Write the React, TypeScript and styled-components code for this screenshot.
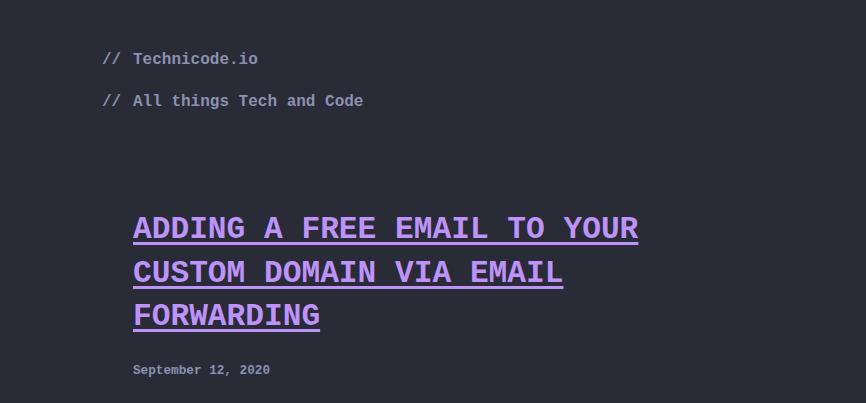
import React from 'react'
import styled, { createGlobalStyle } from 'styled-components'

const GlobalStyle = createGlobalStyle`
  html, body {
    margin: 0;
    padding: 0;
    background: #292b37;
  }
  body {
    font-family: "Liberation Mono", "Courier New", monospace;
  }
`

const Page = styled.div`
  min-height: 403px;
  background: #292b37;
  padding: 46px 0 0 102px;
  box-sizing: border-box;
`

const Header = styled.header`
  display: flex;
  flex-direction: column;
  gap: 14px;
`

const HeaderLine = styled.div`
  display: flex;
  font-size: 16px;
  line-height: 28px;
  font-weight: bold;
  color: #8a92b0;
`

const Slashes = styled.span`
  width: 31px;
  flex-shrink: 0;
`

const Post = styled.article`
  padding: 92px 0 0 31px;
  max-width: 520px;
`

const Title = styled.h1`
  margin: 0;
  font-size: 31.2px;
  line-height: 43.6px;
  font-weight: bold;
  text-transform: uppercase;
  a {
    color: #bd93f9;
    text-decoration: underline;
    text-decoration-thickness: 3px;
    text-underline-offset: 4px;
  }
`

const PostDate = styled.div`
  margin-top: 24px;
  font-size: 12.7px;
  font-weight: bold;
  color: #8a92b0;
`

function App() {
  return (
    <>
      <GlobalStyle />
      <Page>
        <Header>
          <HeaderLine>
            <Slashes>//</Slashes>
            <span>Technicode.io</span>
          </HeaderLine>
          <HeaderLine>
            <Slashes>//</Slashes>
            <span>All things Tech and Code</span>
          </HeaderLine>
        </Header>
        <Post>
          <Title>
            <a href="#">Adding a free email to your custom domain via email forwarding</a>
          </Title>
          <PostDate>September 12, 2020</PostDate>
        </Post>
      </Page>
    </>
  )
}

export default App
